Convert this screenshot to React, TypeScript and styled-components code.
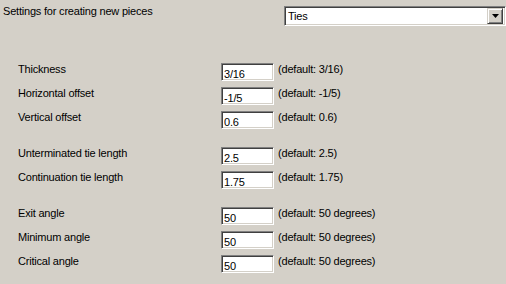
import styled, { createGlobalStyle } from 'styled-components'

const GlobalStyle = createGlobalStyle`
    html, body {
        margin: 0;
        padding: 0;
        background: #d4d0c8;
    }
    body {
        font-family: "Liberation Sans", Arial, sans-serif;
        font-size: 11px;
        letter-spacing: -0.2px;
        color: #000;
    }
`

type Setting = { label: string; value: string; def: string }

const groups: Setting[][] = [
    [
        { label: 'Thickness', value: '3/16', def: '3/16' },
        { label: 'Horizontal offset', value: '-1/5', def: '-1/5' },
        { label: 'Vertical offset', value: '0.6', def: '0.6' },
    ],
    [
        { label: 'Unterminated tie length', value: '2.5', def: '2.5' },
        { label: 'Continuation tie length', value: '1.75', def: '1.75' },
    ],
    [
        { label: 'Exit angle', value: '50', def: '50 degrees' },
        { label: 'Minimum angle', value: '50', def: '50 degrees' },
        { label: 'Critical angle', value: '50', def: '50 degrees' },
    ],
]

const App: React.FC = () => {
    return (
        <Page>
            <GlobalStyle />
            <Header>
                <Title>Settings for creating new pieces</Title>
                <Combo>
                    <ComboText>Ties</ComboText>
                    <ComboButton>
                        <svg width="7" height="4" viewBox="0 0 7 4">
                            <path d="M0 0h7L3.5 4z" fill="#000" />
                        </svg>
                    </ComboButton>
                </Combo>
            </Header>
            <Groups>
                {groups.map((g, gi) => (
                    <Group key={gi}>
                        {g.map((s) => (
                            <Row key={s.label}>
                                <Label>{s.label}</Label>
                                <Field type="text" defaultValue={s.value} />
                                <Hint>(default: {s.def})</Hint>
                            </Row>
                        ))}
                    </Group>
                ))}
            </Groups>
        </Page>
    )
}

const Page = styled.div`
    width: 506px;
    height: 284px;
    overflow: hidden;
`

const Header = styled.div`
    display: flex;
    justify-content: space-between;
    align-items: flex-start;
    padding: 5px 0 0 3px;
`

const Title = styled.div`
    line-height: 13px;
`

const Combo = styled.div`
    box-sizing: border-box;
    width: 222px;
    height: 20px;
    margin-top: 1px;
    display: flex;
    align-items: center;
    background: #fff;
    border: 1px solid;
    border-color: #808080 #fff #fff #808080;
    box-shadow: inset 1px 1px #404040, inset -1px -1px #d4d0c8;
    padding: 2px 2px 2px 3px;
`

const ComboText = styled.span`
    flex: 1;
    line-height: 13px;
`

const ComboButton = styled.div`
    box-sizing: border-box;
    width: 16px;
    height: 16px;
    display: flex;
    align-items: center;
    justify-content: center;
    background: #d4d0c8;
    border: 1px solid;
    border-color: #d4d0c8 #404040 #404040 #d4d0c8;
    box-shadow: inset 1px 1px #fff, inset -1px -1px #808080;
`

const Groups = styled.div`
    padding: 37px 0 0 18px;
    display: flex;
    flex-direction: column;
    gap: 12px;
`

const Group = styled.div`
    display: flex;
    flex-direction: column;
`

const Row = styled.div`
    display: grid;
    grid-template-columns: 199px 53px auto;
    column-gap: 4px;
    align-items: start;
    height: 24px;
`

const Label = styled.span`
    line-height: 13px;
`

const Field = styled.input`
    box-sizing: border-box;
    width: 53px;
    height: 18px;
    margin: 0;
    padding: 3px 2px 0 2px;
    font-family: "Liberation Sans", Arial, sans-serif;
    font-size: 11px;
    letter-spacing: -0.2px;
    color: #000;
    background: #fff;
    border: 1px solid;
    border-color: #808080 #fff #fff #808080;
    box-shadow: inset 1px 1px #404040, inset -1px -1px #d4d0c8;
    outline: none;
`

const Hint = styled.span`
    line-height: 13px;
    color: #000;
`

export default App
